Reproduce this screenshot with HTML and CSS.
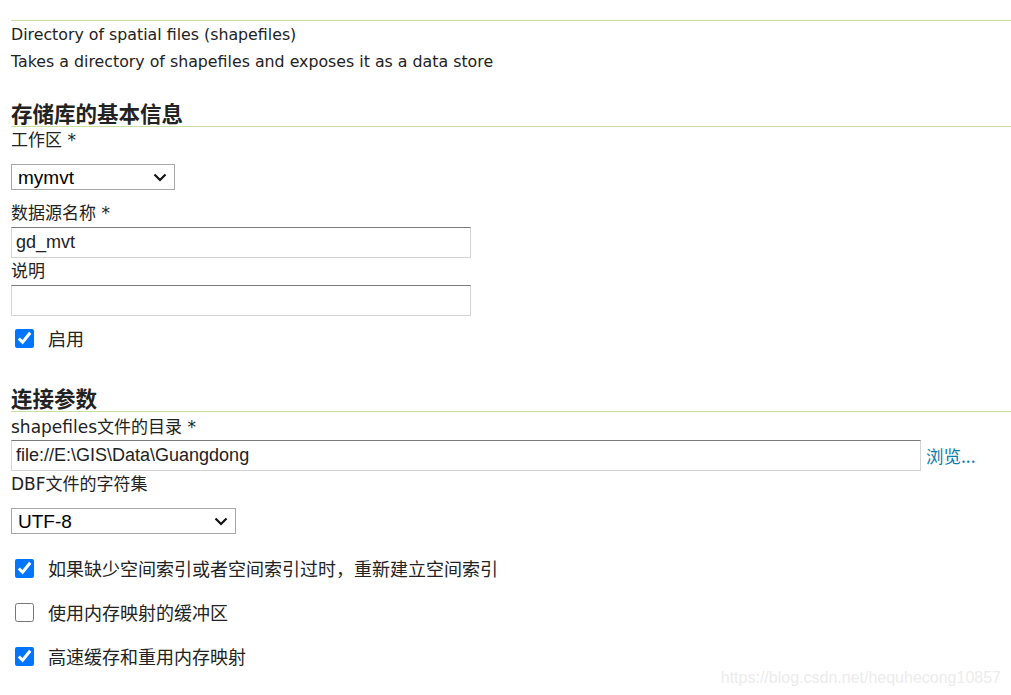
FILE: index.html
```html
<!DOCTYPE html>
<html lang="zh-CN">
<head>
<meta charset="utf-8">
<title>新建矢量数据源</title>
<link rel="stylesheet" href="styles.css">
</head>
<body>
<div class="page">
  <div class="rule"></div>
  <div class="desc">
    <p>Directory of spatial files (shapefiles)</p>
    <p>Takes a directory of shapefiles and exposes it as a data store</p>
  </div>

  <h2 class="section first">存储库的基本信息</h2>
  <div class="label">工作区 *</div>
  <div class="select-wrap ws">
    <select class="select"><option>mymvt</option></select>
    <svg class="chev" width="14" height="9" viewBox="0 0 14 9"><path d="M1.5 1.5 L7 7 L12.5 1.5" fill="none" stroke="#111" stroke-width="2.2"/></svg>
  </div>
  <div class="label gap">数据源名称 *</div>
  <input class="text short" type="text" value="gd_mvt">
  <div class="label">说明</div>
  <input class="text short" type="text" value="">
  <label class="check first-check"><input type="checkbox" checked><span>启用</span></label>

  <h2 class="section second">连接参数</h2>
  <div class="label top2">shapefiles文件的目录 *</div>
  <div class="file-row">
    <input class="text long" type="text" value="file://E:\GIS\Data\Guangdong">
    <a class="browse" href="#">浏览...</a>
  </div>
  <div class="label">DBF文件的字符集</div>
  <div class="select-wrap cs">
    <select class="select"><option>UTF-8</option></select>
    <svg class="chev" width="14" height="9" viewBox="0 0 14 9"><path d="M1.5 1.5 L7 7 L12.5 1.5" fill="none" stroke="#111" stroke-width="2.2"/></svg>
  </div>
  <label class="check c1"><input type="checkbox" checked><span>如果缺少空间索引或者空间索引过时，重新建立空间索引</span></label>
  <label class="check c2"><input type="checkbox"><span>使用内存映射的缓冲区</span></label>
  <label class="check c2"><input type="checkbox" checked><span>高速缓存和重用内存映射</span></label>
</div>
<div class="watermark">https://blog.csdn.net/hequhecong10857</div>
</body>
</html>
```
FILE: styles.css
```css
html, body {
  margin: 0;
  padding: 0;
  background: #fff;
}
body {
  font-family: "DejaVu Sans", "Noto Sans CJK SC", sans-serif;
  color: #222;
  position: relative;
  height: 695px;
  overflow: hidden;
}
.page {
  padding-left: 11px;
}
.rule {
  margin-top: 20px;
  border-top: 1px solid #c6e29c;
}
.desc p {
  margin: 0;
  font-size: 15.8px;
  line-height: 27px;
}
.section {
  margin: 0;
  font-family: "Noto Sans CJK SC", sans-serif;
  font-size: 21.5px;
  font-weight: 700;
  line-height: 27px;
  color: #222;
  border-bottom: 1px solid #c6e29c;
}
.section.first { margin-top: 24px; }
.section.second { margin-top: 34px; }
.label {
  font-family: "DejaVu Sans", "Noto Sans CJK SC", sans-serif;
  font-size: 17px;
  line-height: 26px;
  color: #222;
}
.label.gap { margin-top: 10px; }
.label.top2 { margin-top: 2px; }
.select-wrap {
  position: relative;
  margin-top: 11px;
  height: 26px;
}
.select-wrap.ws { width: 164px; }
.select-wrap.cs { width: 225px; }
.select {
  appearance: none;
  -webkit-appearance: none;
  box-sizing: border-box;
  width: 100%;
  height: 26px;
  margin: 0;
  padding: 0 0 0 6px;
  border: 1px solid #a8a8a8;
  border-radius: 0;
  background: #fff;
  font-family: "Liberation Sans", sans-serif;
  font-size: 19px;
  color: #000;
}
.chev {
  position: absolute;
  right: 8px;
  top: 9px;
}
.text {
  display: block;
  box-sizing: border-box;
  height: 31px;
  margin: 1px 0 0 0;
  padding: 0 4px;
  border: 1px solid #d4d4d4;
  border-top-color: #7a7a7a;
  border-radius: 0;
  font-family: "Liberation Sans", sans-serif;
  font-size: 18px;
  color: #222;
  background: #fff;
  outline: none;
}
.text.short { width: 460px; }
.text.long { width: 910px; margin-top: 0; }
.file-row {
  display: flex;
  align-items: center;
  gap: 5px;
}
.browse {
  font-family: "Noto Sans CJK SC", sans-serif;
  font-size: 17.5px;
  color: #0b7dad;
  text-decoration: none;
}
.check {
  display: flex;
  align-items: center;
  height: 24px;
  font-family: "Noto Sans CJK SC", sans-serif;
  font-size: 18px;
  color: #222;
}
.check input {
  width: 19px;
  height: 19px;
  margin: 0 14px 0 4px;
  accent-color: #0075ff;
}
.check.first-check { margin-top: 10px; }
.check.c1 { margin-top: 22px; }
.check.c2 { margin-top: 20px; }
.watermark {
  position: absolute;
  right: 10px;
  bottom: 8px;
  font-family: "Liberation Sans", sans-serif;
  font-size: 16px;
  color: #ececec;
}
```
